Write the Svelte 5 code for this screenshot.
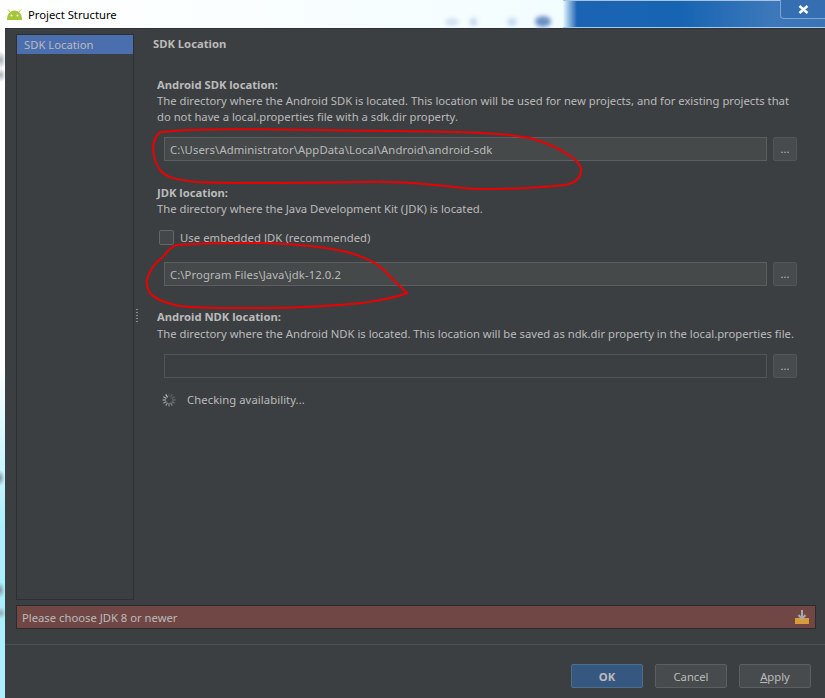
<script>
  let groups = [
    {
      id: 'sdk',
      title: 'Android SDK location:',
      desc: ['The directory where the Android SDK is located. This location will be used for new projects, and for existing projects that', 'do not have a local.properties file with a sdk.dir property.'],
      value: 'C:\\Users\\Administrator\\AppData\\Local\\Android\\android-sdk'
    },
    {
      id: 'jdk',
      title: 'JDK location:',
      desc: ['The directory where the Java Development Kit (JDK) is located.'],
      check: 'Use embedded JDK (recommended)',
      value: 'C:\\Program Files\\Java\\jdk-12.0.2'
    },
    {
      id: 'ndk',
      title: 'Android NDK location:',
      desc: ['The directory where the Android NDK is located. This location will be saved as ndk.dir property in the local.properties file.'],
      value: ''
    }
  ];
  const spokes = [0, 30, 60, 90, 120, 150, 180, 210, 240, 270, 300, 330];
</script>

<div class="window">
  <header class="titlebar">
    <span class="blob b1"></span>
    <span class="blob b2"></span>
    <span class="blob b3"></span>
    <span class="blob b4"></span>
    <svg class="droid" width="17" height="11" viewBox="0 0 17 11">
      <path d="M1 11 C1 5 4 1.500 8.500 1.500 C13 1.500 16 5 16 11 Z" fill="#a4c639"/>
      <path d="M4 3 L2 0.500 M13 3 L15 0.500" stroke="#a4c639" stroke-width="1"/>
      <circle cx="5.500" cy="6.500" r="1" fill="#fff"/>
      <circle cx="11.500" cy="6.500" r="1" fill="#fff"/>
    </svg>
    <span class="wintitle">Project Structure</span>
    <div class="blue"></div>
    <button class="close" aria-label="Close">
      <svg width="11" height="9" viewBox="0 0 11 9"><path d="M1.500 1 L9.500 8 M9.500 1 L1.500 8" stroke="#fff" stroke-width="2.400"/></svg>
    </button>
  </header>

  <div class="shell">
    <div class="edge"></div>
    <div class="dialog">
      <div class="panels">
        <aside class="sidebar">
          <div class="item">SDK Location</div>
        </aside>
        <span class="grip"></span>
        <main class="content">
          <h1>SDK Location</h1>
          {#each groups as g}
            <section class="group {g.id}">
              <div class="label">{g.title}</div>
              {#each g.desc as line}
                <div class="desc">{line}</div>
              {/each}
              {#if g.check}
                <div class="check"><span class="box"></span>{g.check}</div>
              {/if}
              <div class="row">
                <div class="field">{g.value}</div>
                <div class="browse">...</div>
              </div>
            </section>
          {/each}
          <div class="status">
            <svg class="spinner" width="14" height="14" viewBox="0 0 14 14">
              {#each spokes as a, i}
                <line x1="7" y1="0.500" x2="7" y2="4" stroke="#c4c4c4" stroke-width="1.200" opacity={0.15 + i * 0.07} transform="rotate({a} 7 7)"/>
              {/each}
            </svg>
            Checking availability...
          </div>
        </main>
      </div>

      <div class="banner">
        <span>Please choose JDK 8 or newer</span>
        <svg width="14" height="14" viewBox="0 0 14 14">
          <rect x="0" y="8" width="14" height="6" fill="#d99a3c"/>
          <path d="M7 0 V8 M3.500 5 L7 9 L10.500 5" fill="none" stroke="#a8a8a8" stroke-width="2"/>
        </svg>
      </div>

      <footer class="actions">
        <button class="btn primary">OK</button>
        <button class="btn">Cancel</button>
        <button class="btn"><u>A</u>pply</button>
      </footer>
    </div>
  </div>

  <svg class="scribble" width="825" height="698" viewBox="0 0 825 698">
    <path d="M162 132 C200 127 300 130 400 131 C450 132 500 132 530 138 C555 145 578 158 581 168 C582 178 575 183 565 185 C530 189 480 190 463 188 C430 184 400 181 363 182 C300 183 240 184 197 182 C175 180 166 177 160 170 C153 160 151 145 156 137 C158 134 160 132 162 132" fill="none" stroke="#ec0000" stroke-width="2"/>
    <path d="M163 257 C168 250 172 246 177 245 C210 242 240 243 263 243 C300 244 325 247 347 252 C365 257 376 262 384 270 C393 280 402 288 407 293 C395 298 380 300 363 303 C330 306 295 308 263 308 C235 308 205 309 180 306 C165 303 155 299 150 293 C146 287 146 280 149 274 C152 267 157 261 163 257" fill="none" stroke="#ec0000" stroke-width="2"/>
  </svg>
</div>

<style>
  :global(body) {
    margin: 0;
    background: #3c3f41;
  }
  .window {
    position: relative;
    width: 825px;
    height: 698px;
    overflow: hidden;
    font-family: "Noto Sans", "Open Sans", sans-serif;
    font-size: 11.25px;
    color: #bbb;
    display: flex;
    flex-direction: column;
  }
  .titlebar {
    position: relative;
    height: 28px;
    flex: none;
    display: flex;
    align-items: center;
    padding-left: 6px;
    background: linear-gradient(90deg, #fff 0, #f4fdff 60%, #e8fbff 100%);
    box-sizing: border-box;
  }
  .wintitle {
    margin-left: 5px;
    color: #000;
    position: relative;
  }
  .droid {
    position: relative;
  }
  .blob {
    position: absolute;
    width: 10px;
    height: 8px;
    border-radius: 50%;
    background: #8fb0dc;
    filter: blur(2px);
    top: 18px;
  }
  .b1 { left: 445px; width: 14px; opacity: 0.35; }
  .b2 { left: 470px; width: 7px; opacity: 0.5; }
  .b3 { left: 507px; opacity: 0.45; }
  .b4 { left: 535px; width: 16px; height: 11px; top: 16px; background: #5c85c0; opacity: 0.9; }
  .blue {
    position: absolute;
    top: 0;
    bottom: 0;
    left: 563px;
    right: 0;
    border-top: 1px solid #a9c3de;
    border-bottom: 1px solid #a3cdf2;
    background: linear-gradient(90deg, #e8fbff 0, #1b63b3 14px, #1764b2 45%, #3d78ba 80%, #3a74b6 100%);
  }
  .close {
    position: absolute;
    top: 0;
    left: 780px;
    width: 46px;
    height: 19px;
    padding: 0;
    border: 1px solid #7fa6d2;
    border-top: 0;
    border-radius: 0 0 0 4px;
    background: #356fb2;
    display: flex;
    align-items: center;
    justify-content: center;
  }
  .shell {
    flex: 1;
    display: flex;
    min-height: 0;
  }
  .edge {
    width: 5px;
    flex: none;
    background:
      radial-gradient(ellipse 5px 9px at 1px 32px, #a9b2b8, transparent),
      radial-gradient(ellipse 5px 7px at 1px 47px, #a9b2b8, transparent),
      radial-gradient(ellipse 5px 8px at 0 450px, #8a979e, transparent),
      radial-gradient(ellipse 5px 8px at 0 562px, #8a979e, transparent),
      radial-gradient(ellipse 5px 6px at 1px 585px, #9aa8ae, transparent),
      linear-gradient(#fff 0, #fff 50%, #a8f0ff 75%, #a8f0ff 100%);
  }
  .dialog {
    flex: 1;
    min-width: 0;
    display: flex;
    flex-direction: column;
    background: #3c3f41;
    border-top: 1px solid #2f3136;
  }
  .panels {
    height: 576px;
    padding: 5px 0 0 11px;
    box-sizing: border-box;
    display: flex;
    flex: none;
    position: relative;
  }
  .sidebar {
    width: 118px;
    height: 566px;
    box-sizing: border-box;
    flex: none;
    border: 1px solid #2d2f30;
  }
  .item {
    height: 19px;
    line-height: 19px;
    padding-left: 7px;
    background: #4b6eaf;
  }
  .grip {
    position: absolute;
    left: 131px;
    top: 280px;
    width: 2px;
    height: 15px;
    background: repeating-linear-gradient(#8a8d8f 0 1px, transparent 1px 3px);
  }
  .content {
    padding-left: 19px;
    width: 660px;
  }
  h1 {
    margin: 0 0 23px;
    font-size: inherit;
    font-weight: 700;
    line-height: 20px;
  }
  .group {
    margin-left: 4px;
  }
  .label {
    font-weight: 700;
    line-height: 16px;
  }
  .desc {
    line-height: 16px;
    white-space: nowrap;
  }
  .row {
    display: flex;
    gap: 6px;
    margin: 12px 0 24px 7px;
  }
  .jdk .row {
    margin-top: 17px;
    margin-bottom: 23px;
  }
  .ndk .desc {
    margin-top: 1px;
  }
  .ndk .row {
    margin-top: 12px;
    margin-bottom: 14px;
  }
  .field {
    width: 603px;
    height: 24px;
    line-height: 24px;
    box-sizing: border-box;
    padding-left: 5px;
    background: #45494a;
    border: 1px solid #5c5e5f;
    letter-spacing: 0.1px;
  }
  .ndk .field {
    background: #3c3f41;
    border-color: #525455;
  }
  .browse {
    width: 24px;
    height: 24px;
    box-sizing: border-box;
    text-align: center;
    line-height: 22px;
    background: #484b4d;
    border: 1px solid #535658;
    border-radius: 2px;
    font-size: 11px;
  }
  .check {
    display: flex;
    align-items: center;
    gap: 6px;
    height: 15px;
    margin: 13px 0 0 2px;
    letter-spacing: 0.07px;
  }
  .box {
    width: 13px;
    height: 13px;
    border: 1px solid #646668;
    border-radius: 2px;
    background: #43474a;
  }
  .status {
    display: flex;
    align-items: center;
    margin-left: 9px;
    height: 16px;
    line-height: 16px;
    letter-spacing: 0.08px;
  }
  .spinner {
    margin-right: 11px;
  }
  .banner {
    width: 800px;
    height: 24px;
    margin-left: 11px;
    box-sizing: border-box;
    padding: 0 6px 0 5px;
    display: flex;
    align-items: center;
    justify-content: space-between;
    background: #704745;
    border: 1px solid #2b2b2b;
  }
  .actions {
    margin-top: 15px;
    border-top: 1px solid #515151;
    padding: 19px 14px 0 0;
    display: flex;
    justify-content: flex-end;
    gap: 12px;
  }
  .btn {
    width: 72px;
    height: 24px;
    padding: 0;
    font: inherit;
    color: #bbb;
    background: #484b4d;
    border: 1px solid #5c5f61;
    border-radius: 2px;
  }
  .primary {
    background: #365880;
    border-color: #4c708c;
    font-weight: 700;
  }
  .scribble {
    position: absolute;
    left: 0;
    top: 0;
    pointer-events: none;
  }
</style>
